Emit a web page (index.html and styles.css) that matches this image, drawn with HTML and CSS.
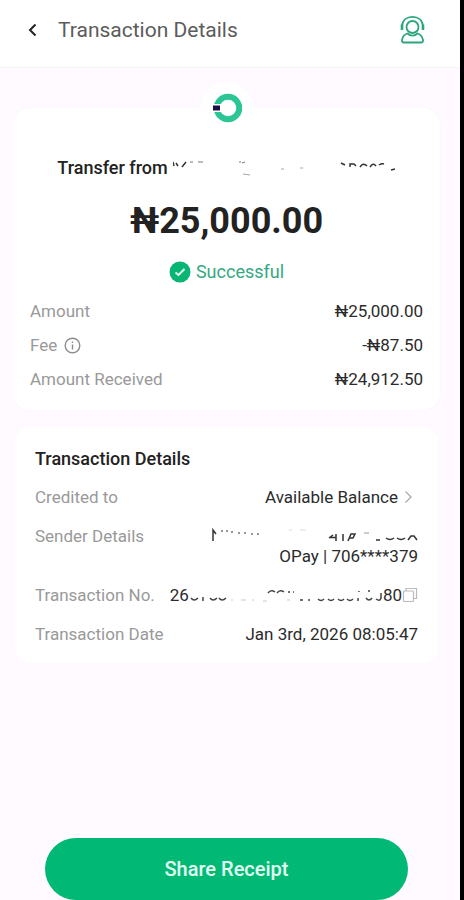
FILE: index.html
```html
<!DOCTYPE html>
<html lang="en">
<head>
<meta charset="utf-8">
<meta name="viewport" content="width=device-width, initial-scale=1">
<title>Transaction Details</title>
<link rel="stylesheet" href="styles.css">
</head>
<body>
<div class="app">
  <header class="topbar">
    <button class="icon-button" type="button" aria-label="Back">
      <svg width="10" height="14" viewBox="0 0 10 14" fill="none" stroke="#222" stroke-width="2"><path d="M7.500 1.500 2 7l5.500 5.500"/></svg>
    </button>
    <h1 class="title">Transaction Details</h1>
    <button class="icon-button" type="button" aria-label="Customer support">
      <svg width="26" height="29" viewBox="0 0 26 29" fill="none" stroke="#2ba67c" stroke-width="1.800">
        <circle cx="12.500" cy="12" r="6"/>
        <path d="M2 11C2.500 5 7 1.800 12.500 1.800S22.500 5 23 11"/>
        <path d="M2 9.500v5.500M23 9.500v5.500" stroke-width="2.600"/>
        <path d="M7.500 18.500c-3 .8-5 3.500-5.500 6.500-.2 1.800.5 2.500 2 2.500h17c1.500 0 2.200-.7 2-2.500-.5-3-2.500-5.700-5.500-6.500-1.500 1.500-3 2.200-5 2.200s-3.500-.7-5-2.200z" stroke-linejoin="round"/>
      </svg>
    </button>
  </header>

  <main class="content">
    <section class="card summary">
      <span class="brand">
        <svg width="30" height="30" viewBox="0 0 30 30" role="img" aria-label="OPay">
          <circle cx="16" cy="15" r="11.300" fill="none" stroke="#2bc596" stroke-width="6"/>
          <path fill="#fff" d="M0 11h9v8H0z"/>
          <path fill="#1c1048" d="M1 12.500h7v5H1z"/>
        </svg>
      </span>
      <p class="transfer">Transfer from
        <svg width="223" height="18" viewBox="173 158 223 18" fill="none" stroke="#333" stroke-width="1.500" aria-hidden="true">
          <path d="M173 161l1 4M176 162l2 3M182 166l4-5"/>
          <path d="M190 161h3M198 161h5M239 161h2M242 162l3-1" stroke="#777" stroke-width="1"/>
          <path d="M243 173l7 1M281 168h3M300 167h3" stroke-width="1" stroke="#aaa"/>
          <path d="M341 162l4 2M350 166v-3h4l2 2M360 166q3-5 7-1M370 166q3-5 6-1M379 164q3-2 5-1M391 169l4-1"/>
        </svg>
      </p>
      <p class="total">₦25,000.00</p>
      <p class="status">
        <svg width="22" height="22" viewBox="0 0 22 22" aria-hidden="true"><circle cx="11" cy="11" r="10.500" fill="#08b573"/><path d="M6.500 11.500 9.500 14l6-6" fill="none" stroke="#e6fff4" stroke-width="2"/></svg>
        Successful
      </p>
      <dl class="rows amounts">
        <div class="row"><dt>Amount</dt><dd>₦25,000.00</dd></div>
        <div class="row"><dt>Fee
          <button class="icon-button" type="button" aria-label="About the fee">
            <svg width="17" height="17" viewBox="0 0 17 17" fill="none" stroke="#8d8d8d" stroke-width="1.400"><circle cx="8.500" cy="8.500" r="7.300"/><path d="M8.500 7.500v5M8.500 4.500v1.500"/></svg>
          </button></dt><dd>-₦87.50</dd></div>
        <div class="row"><dt>Amount Received</dt><dd>₦24,912.50</dd></div>
      </dl>
    </section>

    <section class="card details">
      <h2 class="heading">Transaction Details</h2>
      <dl class="rows">
        <div class="row"><dt>Credited to</dt><dd>
          <a class="account" href="#balance">Available Balance
            <svg width="14" height="14" viewBox="0 0 14 14" fill="none" stroke="#aaa" stroke-width="1.300" aria-hidden="true"><path d="M1.500 1.500 7 7l-5.500 5.500"/></svg>
          </a></dd></div>
        <div class="row"><dt>Sender Details</dt><dd class="stack">
          <svg width="207" height="20" viewBox="212 527 207 20" fill="none" stroke="#333" stroke-width="1.500" aria-hidden="true">
            <path d="M214 542v-11l3 4"/>
            <path d="M222 532h2M227 532h2M232 533h2M239 534h2M245 534h2M252 535h2M258 535h2" stroke-width="1.200"/>
            <path d="M290 531h3M301 531h6" stroke="#ddd" stroke-width="1"/>
            <path d="M330 539l4-3M331 538.500h6M337 535v7M344 535v7M349 542l3-7h4l-2 4h-4"/>
            <path d="M365 534h5" stroke="#999" stroke-width="1"/>
            <path d="M377 541h4M387 539q4 3 8 0M398 539q4 3 8 0M409 541l3-4h3l3 4"/>
          </svg>
          <span>OPay | 706****379</span></dd></div>
        <div class="row"><dt>Transaction No.</dt><dd class="number">
          <span>26</span>
          <svg width="194" height="18" viewBox="189 586 194 18" fill="none" stroke="#444" stroke-width="1.500" aria-hidden="true">
            <path d="M191 598q3 4 7 0M203 597v4M210 598q3 4 7 0M219 598q3 4 7 0"/>
            <path d="M231 600h2M241 600h5M252 600h2M263 601h4M287 600h3" stroke="#ccc" stroke-width="1"/>
            <path d="M268 593q3-4 7-1M277 593q3-4 7-1M288 592h2M293 592h1"/>
            <path d="M300 600h3M308 600h2M318 599q3 3 6 0M328 599q3 3 6 0M338 599q3 3 6 0M347 599q3 3 6 0M358 598v3M359 591v1M366 598q3 4 6 0M368 591h2M376 599q4 3 5-1v-5"/>
          </svg>
          <span>80</span>
          <button class="icon-button" type="button" aria-label="Copy transaction number">
            <svg width="16" height="16" viewBox="0 0 16 16" fill="none" stroke="#bbb" stroke-width="1.200"><rect x="1.500" y="4" width="10" height="10.500" rx="1"/><path d="M4 4V1.500h10.500v10h-3"/></svg>
          </button></dd></div>
        <div class="row"><dt>Transaction Date</dt><dd>Jan 3rd, 2026 08:05:47</dd></div>
      </dl>
    </section>

    <button class="share" type="button">Share Receipt</button>
  </main>
</div>
</body>
</html>
```
FILE: styles.css
```css
* { box-sizing: border-box; }

body, h1, h2, p, dl, dd { margin: 0; }

body {
  background: #fefaff;
  color: #2b2b2b;
  font-family: Roboto, "Liberation Sans", sans-serif;
  font-size: 17px;
  line-height: 20px;
}

svg { display: block; flex: none; }

.app {
  display: flex;
  flex-direction: column;
  min-height: 100vh;
  border-right: 4px solid #000;
}

.icon-button {
  display: flex;
  padding: 0;
  border: 0;
  background: none;
}

.topbar {
  display: flex;
  align-items: center;
  gap: 20px;
  height: 68px;
  padding: 0 34px 8px 28px;
  background: #fff;
  border-bottom: 1px solid #f3f3f9;
}

.title {
  flex: 1;
  color: #5c5c5c;
  font-size: 21px;
  font-weight: 400;
}

.content {
  flex: 1;
  display: flex;
  flex-direction: column;
  padding: 40px 20px 0 13px;
}

.card {
  background: #fff;
  border-radius: 16px;
}

.summary {
  position: relative;
  padding: 46px 17px 19px;
  box-shadow: 0 0 1px #f0e6f0;
}

.brand {
  position: absolute;
  top: -26px;
  left: 50%;
  padding: 11px;
  border-radius: 50%;
  background: #fff;
  transform: translateX(-50%);
}

.transfer {
  display: flex;
  justify-content: center;
  align-items: center;
  gap: 5px;
  color: #222;
  font-size: 18px;
  font-weight: 500;
  line-height: 28px;
  white-space: nowrap;
}

.total {
  margin-top: 17px;
  color: #222;
  font-size: 36px;
  font-weight: 700;
  line-height: 44px;
  text-align: center;
}

.status {
  display: flex;
  justify-content: center;
  align-items: center;
  gap: 5px;
  margin: 17px 0 15px;
  color: #35a883;
  font-size: 18px;
  line-height: 24px;
}

.rows {
  display: flex;
  flex-direction: column;
  gap: 19px;
}

.amounts {
  gap: 10px;
  line-height: 24px;
}

.row {
  display: flex;
  justify-content: space-between;
}

dt {
  display: flex;
  align-items: center;
  gap: 7px;
  align-self: flex-start;
  color: #999;
  white-space: nowrap;
}

.details {
  margin: 17px 2px 0;
  padding: 20px 20px 19px;
}

.heading {
  margin-bottom: 16px;
  color: #222;
  font-size: 18px;
  font-weight: 500;
  line-height: 24px;
}

.account {
  display: flex;
  align-items: center;
  gap: 6px;
  color: inherit;
  text-decoration: none;
}

.stack {
  display: flex;
  flex-direction: column;
  align-items: flex-end;
}

.number {
  display: flex;
  align-items: center;
}

.share {
  height: 62px;
  margin: auto 32px 0;
  border: 0;
  border-radius: 31px;
  background: #02b875;
  color: #e2fff3;
  font: 500 20px/24px Roboto, "Liberation Sans", sans-serif;
}
```
